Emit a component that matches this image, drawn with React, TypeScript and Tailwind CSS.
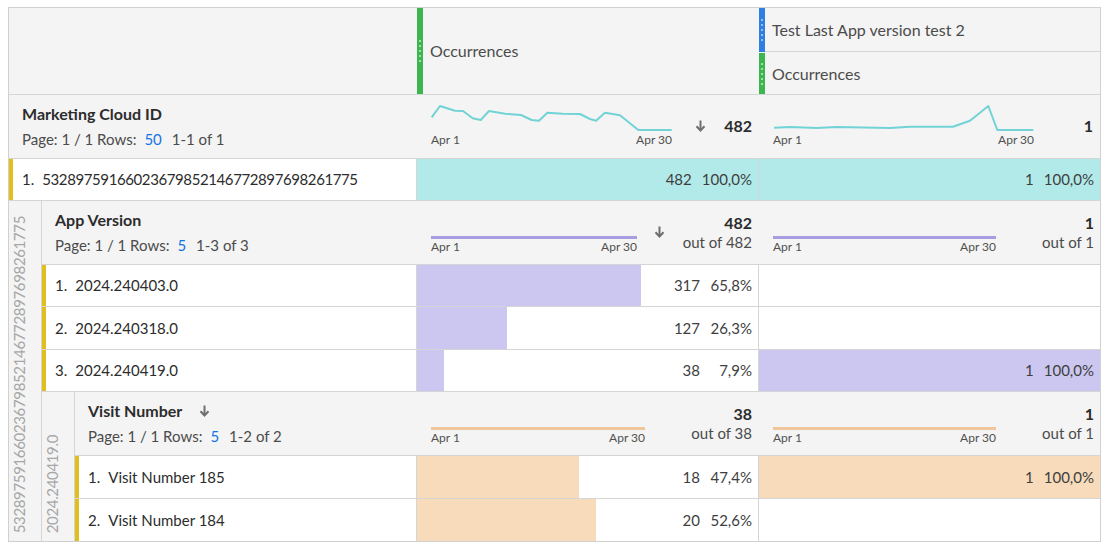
import React from "react";

const MCID = "53289759166023679852146772897698261775";

const SPARK2: [number, number][] = [
  [0.7, 13.3], [9, 2], [24, 6.7], [32, 7], [41.7, 14.3], [49.7, 16], [58, 7], [74, 9.7], [90, 11],
  [100.7, 16], [108, 16.7], [116.3, 8.7], [132, 9.7], [149, 10], [159, 15], [165, 16.7], [174, 8.7],
  [189, 11.3], [207.3, 26], [240.7, 26],
];
const SPARK3: [number, number][] = [
  [1, 23.7], [17, 23], [43.7, 24], [63.7, 23], [117, 24], [137, 22.7], [180, 22.7], [197, 16.7],
  [215.3, 2], [224.3, 26], [260.3, 26],
];

function Spark({ pts, w }: { pts: [number, number][]; w: number }) {
  return (
    <svg width={w} height={28} viewBox={`0 0 ${w} 28`} className="block">
      <polyline
        points={pts.map((p) => `${p[0]},${p[1] + 1}`).join(" ")}
        fill="none"
        stroke="#72d3d6"
        strokeWidth={2}
        strokeLinejoin="round"
      />
    </svg>
  );
}

function Arrow() {
  return (
    <svg width="11" height="12" viewBox="0 0 11 12" className="block">
      <path d="M5.5 0.5 V10" stroke="#6e6e6e" strokeWidth="2" fill="none" />
      <path d="M1.5 6.2 L5.5 10.5 L9.5 6.2" stroke="#6e6e6e" strokeWidth="2" fill="none" strokeLinejoin="miter" />
    </svg>
  );
}

function HeaderBar({ bar, dot }: { bar: string; dot: string }) {
  return (
    <div className={`w-[6px] self-stretch flex flex-col items-center justify-center gap-[3px] ${bar}`}>
      {[0, 1, 2, 3, 4].map((i) => (
        <div key={i} className={`w-[2px] h-[2px] rounded-full ${dot}`} />
      ))}
    </div>
  );
}

function Labels() {
  return (
    <div className="flex justify-between text-[12px] leading-[14px] text-[#505050]">
      <span>Apr 1</span>
      <span>Apr 30</span>
    </div>
  );
}

function TitleBlock({
  title,
  rows,
  range,
  arrow,
}: {
  title: string;
  rows: string;
  range: string;
  arrow?: boolean;
}) {
  return (
    <div className="flex-1 pl-[13px] pt-[9px]">
      <div className="flex items-center text-[16px] leading-[20px] font-bold text-[#2c2c2c]">
        <span>{title}</span>
        {arrow && (
          <span className="ml-[17px]">
            <Arrow />
          </span>
        )}
      </div>
      <div className="mt-[5px] flex text-[15px] leading-[20px] text-[#4b4b4b]">
        <span>Page: 1 / 1 Rows:</span>
        <span className="ml-[8px] text-[#1473e6]">{rows}</span>
        <span className="ml-[10px]">{range}</span>
      </div>
    </div>
  );
}

function FlatCol({
  lineW,
  lineClass,
  total,
  outOf,
  arrow,
}: {
  lineW: string;
  lineClass: string;
  total: string;
  outOf: string;
  arrow?: boolean;
}) {
  return (
    <div className="w-[342px] flex pl-[15px] pr-[6px]">
      <div className={`${lineW} pt-[35px]`}>
        <div className={`h-[3px] ${lineClass}`} />
        <div className="mt-[1px]">
          <Labels />
        </div>
      </div>
      <div className="ml-auto mt-[12px] self-start flex items-center gap-[18px]">
        {arrow && <Arrow />}
        <div className="text-right">
          <div className="text-[16px] leading-[20px] font-bold text-[#2c2c2c]">{total}</div>
          <div className="text-[15px] leading-[18px] text-[#4b4b4b]">{outOf}</div>
        </div>
      </div>
    </div>
  );
}

function ValueCell({
  value,
  pct,
  fill,
  fillClass,
}: {
  value?: string;
  pct?: string;
  fill: number;
  fillClass: string;
}) {
  return (
    <div className="relative w-[342px] border-l border-[#d5d5d5] flex items-center justify-end pr-[6px] gap-[10px] text-[15px] text-[#3e3e3e]">
      {fill > 0 && <div className={`absolute left-0 top-0 bottom-0 ${fillClass}`} style={{ width: `${fill}%` }} />}
      {value && (
        <>
          <span className="relative">{value}</span>
          <span className="relative min-w-[42px] text-right">{pct}</span>
        </>
      )}
    </div>
  );
}

function RowLabel({ n, label, tight }: { n: string; label: string; tight?: boolean }) {
  return (
    <div className="flex-1 flex items-stretch bg-white">
      <div className="w-[4px] bg-[#e0bf1c]" />
      <div className="flex items-center pl-[9px] gap-[8px] text-[15px] text-[#2c2c2c]">
        <span>{n}</span>
        <span className={tight ? "tracking-[-0.4px]" : ""}>{label}</span>
      </div>
    </div>
  );
}

function Strip({ text }: { text: string }) {
  return (
    <div className="w-[33px] shrink-0 border-r border-[#d5d5d5] bg-[#f4f4f4] flex flex-col items-start justify-end pb-[8px]">
      <div className="[writing-mode:vertical-rl] rotate-180 text-[15px] leading-[20px] tracking-[-0.35px] text-[#a6a6a6]">
        {text}
      </div>
    </div>
  );
}

export default function App() {
  const lav = "bg-[#ccc7f0]";
  const peach = "bg-[#f7dbbb]";
  return (
    <div className="w-[1108px] h-[549px] bg-white pt-[7px] pl-[8px] font-['Lato',sans-serif]">
      <div className="w-[1093px] border border-[#d0d0d0] flex flex-col">
        {/* column headers */}
        <div className="flex h-[87px] border-b border-[#d5d5d5] bg-[#f4f4f4]">
          <div className="flex-1" />
          <div className="w-[342px] flex pl-[1px]">
            <HeaderBar bar="bg-[#3db650]" dot="bg-[#c2ecc8]" />
            <div className="flex items-center pl-[7px] text-[16px] text-[#4b4b4b]">Occurrences</div>
          </div>
          <div className="w-[342px] flex flex-col pl-[1px]">
            <div className="flex h-[44px]">
              <HeaderBar bar="bg-[#2f7fe2]" dot="bg-[#b9d6f7]" />
              <div className="flex-1 flex items-center pl-[7px] border-b border-[#d5d5d5] text-[16px] text-[#4b4b4b]">
                Test Last App version test 2
              </div>
            </div>
            <div className="flex flex-1 pt-[1px]">
              <HeaderBar bar="bg-[#3db650]" dot="bg-[#c2ecc8]" />
              <div className="flex-1 flex items-center pl-[7px] text-[16px] text-[#4b4b4b]">Occurrences</div>
            </div>
          </div>
        </div>

        {/* Marketing Cloud ID header */}
        <div className="flex h-[64px] border-b border-[#d5d5d5] bg-[#f4f4f4]">
          <TitleBlock title="Marketing Cloud ID" rows="50" range="1-1 of 1" />
          <div className="w-[342px] flex pl-[15px] pr-[6px]">
            <div className="w-[241px] pt-[8px]">
              <Spark pts={SPARK2} w={241} />
              <div className="mt-[2px]">
                <Labels />
              </div>
            </div>
            <div className="ml-auto mt-[20px] self-start h-[22px] flex items-center gap-[18px]">
              <Arrow />
              <span className="text-[16px] font-bold text-[#2c2c2c]">482</span>
            </div>
          </div>
          <div className="w-[342px] flex pl-[15px] pr-[7px]">
            <div className="w-[261px] pt-[8px]">
              <Spark pts={SPARK3} w={261} />
              <div className="mt-[2px]">
                <Labels />
              </div>
            </div>
            <div className="ml-auto mt-[20px] self-start h-[22px] flex items-center">
              <span className="text-[16px] font-bold text-[#2c2c2c]">1</span>
            </div>
          </div>
        </div>

        {/* MCID row */}
        <div className="flex h-[42px] border-b border-[#d5d5d5]">
          <RowLabel n="1." label={MCID} tight />
          <ValueCell value="482" pct="100,0%" fill={100} fillClass="bg-[#b2eaea]" />
          <ValueCell value="1" pct="100,0%" fill={100} fillClass="bg-[#b2eaea]" />
        </div>

        {/* nested App Version */}
        <div className="flex">
          <Strip text={MCID} />
          <div className="flex-1 flex flex-col">
            <div className="flex h-[64px] border-b border-[#d5d5d5] bg-[#f4f4f4]">
              <TitleBlock title="App Version" rows="5" range="1-3 of 3" />
              <FlatCol lineW="w-[206px]" lineClass="bg-[#a99de2]" total="482" outOf="out of 482" arrow />
              <FlatCol lineW="w-[223px]" lineClass="bg-[#a99de2]" total="1" outOf="out of 1" />
            </div>
            <div className="flex h-[42px] border-b border-[#d5d5d5]">
              <RowLabel n="1." label="2024.240403.0" />
              <ValueCell value="317" pct="65,8%" fill={65.77} fillClass={lav} />
              <ValueCell fill={0} fillClass={lav} />
            </div>
            <div className="flex h-[43px] border-b border-[#d5d5d5]">
              <RowLabel n="2." label="2024.240318.0" />
              <ValueCell value="127" pct="26,3%" fill={26.35} fillClass={lav} />
              <ValueCell fill={0} fillClass={lav} />
            </div>
            <div className="flex h-[42px] border-b border-[#d5d5d5]">
              <RowLabel n="3." label="2024.240419.0" />
              <ValueCell value="38" pct="7,9%" fill={7.88} fillClass={lav} />
              <ValueCell value="1" pct="100,0%" fill={100} fillClass={lav} />
            </div>

            {/* nested Visit Number */}
            <div className="flex">
              <Strip text="2024.240419.0" />
              <div className="flex-1 flex flex-col">
                <div className="flex h-[64px] border-b border-[#d5d5d5] bg-[#f4f4f4]">
                  <TitleBlock title="Visit Number" rows="5" range="1-2 of 2" arrow />
                  <FlatCol lineW="w-[214px]" lineClass="bg-[#f0c79c]" total="38" outOf="out of 38" />
                  <FlatCol lineW="w-[223px]" lineClass="bg-[#f0c79c]" total="1" outOf="out of 1" />
                </div>
                <div className="flex h-[43px] border-b border-[#d5d5d5]">
                  <RowLabel n="1." label="Visit Number 185" />
                  <ValueCell value="18" pct="47,4%" fill={47.37} fillClass={peach} />
                  <ValueCell value="1" pct="100,0%" fill={100} fillClass={peach} />
                </div>
                <div className="flex h-[42px]">
                  <RowLabel n="2." label="Visit Number 184" />
                  <ValueCell value="20" pct="52,6%" fill={52.63} fillClass={peach} />
                  <ValueCell fill={0} fillClass={peach} />
                </div>
              </div>
            </div>
          </div>
        </div>
      </div>
    </div>
  );
}
